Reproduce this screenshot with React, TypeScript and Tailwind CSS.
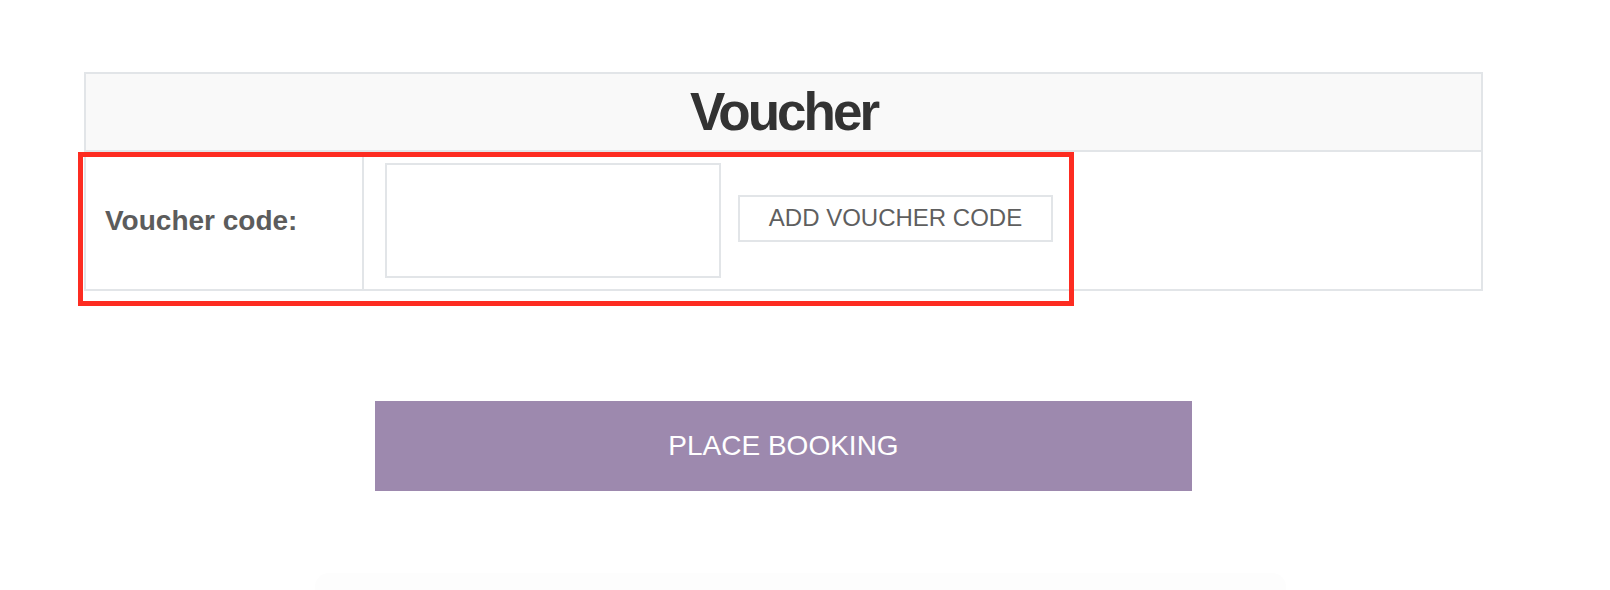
import { useState } from "react";

const App = () => {
  const [code, setCode] = useState("");

  return (
    <div className="relative min-h-[590px] w-[1610px] overflow-hidden bg-white font-['Liberation_Sans',Arial,sans-serif]">
      <div className="pl-[84px] pt-[72px]">
        {/* Voucher table */}
        <div className="w-[1399px] border-2 border-[#e2e5e8]">
          <div className="h-[78px] border-b-2 border-[#e2e5e8] bg-[#f9f9f9] text-center">
            <h2 className="text-[53px] font-bold leading-[76px] tracking-[-3px] text-[#333333]">
              Voucher
            </h2>
          </div>
          <div className="flex">
            <div className="flex w-[278px] items-center border-r-2 border-[#e2e5e8] pl-[19px]">
              <span className="text-[28px] font-bold text-[#5c5c5c]">Voucher code:</span>
            </div>
            <div className="flex items-center gap-[17px] pb-[11px] pl-[21px] pt-[11px]">
              <input
                value={code}
                onChange={(e) => setCode(e.target.value)}
                className="h-[115px] w-[336px] border-2 border-[#e2e5e8] bg-white px-3 text-[24px] outline-none"
              />
              <button className="mb-[5px] h-[47px] w-[315px] border-2 border-[#e2e5e8] bg-white text-[24px] leading-none text-[#5f5f5f]">
                ADD VOUCHER CODE
              </button>
            </div>
          </div>
        </div>

        <div className="flex w-[1399px] justify-center pt-[110px]">
          <button className="h-[90px] w-[817px] bg-[#9d89ae] text-[28px] text-white">
            PLACE BOOKING
          </button>
        </div>

        {/* faint panel peeking in at the bottom */}
        <div className="ml-[231px] mt-[82px] h-[20px] w-[971px] rounded-t-[14px] bg-[#fdfdfd]" />
      </div>

      {/* highlight annotation */}
      <div className="pointer-events-none absolute left-[78px] top-[152px] h-[154px] w-[996px] border-[5px] border-[#fd2c21]" />
    </div>
  );
};

export default App;
